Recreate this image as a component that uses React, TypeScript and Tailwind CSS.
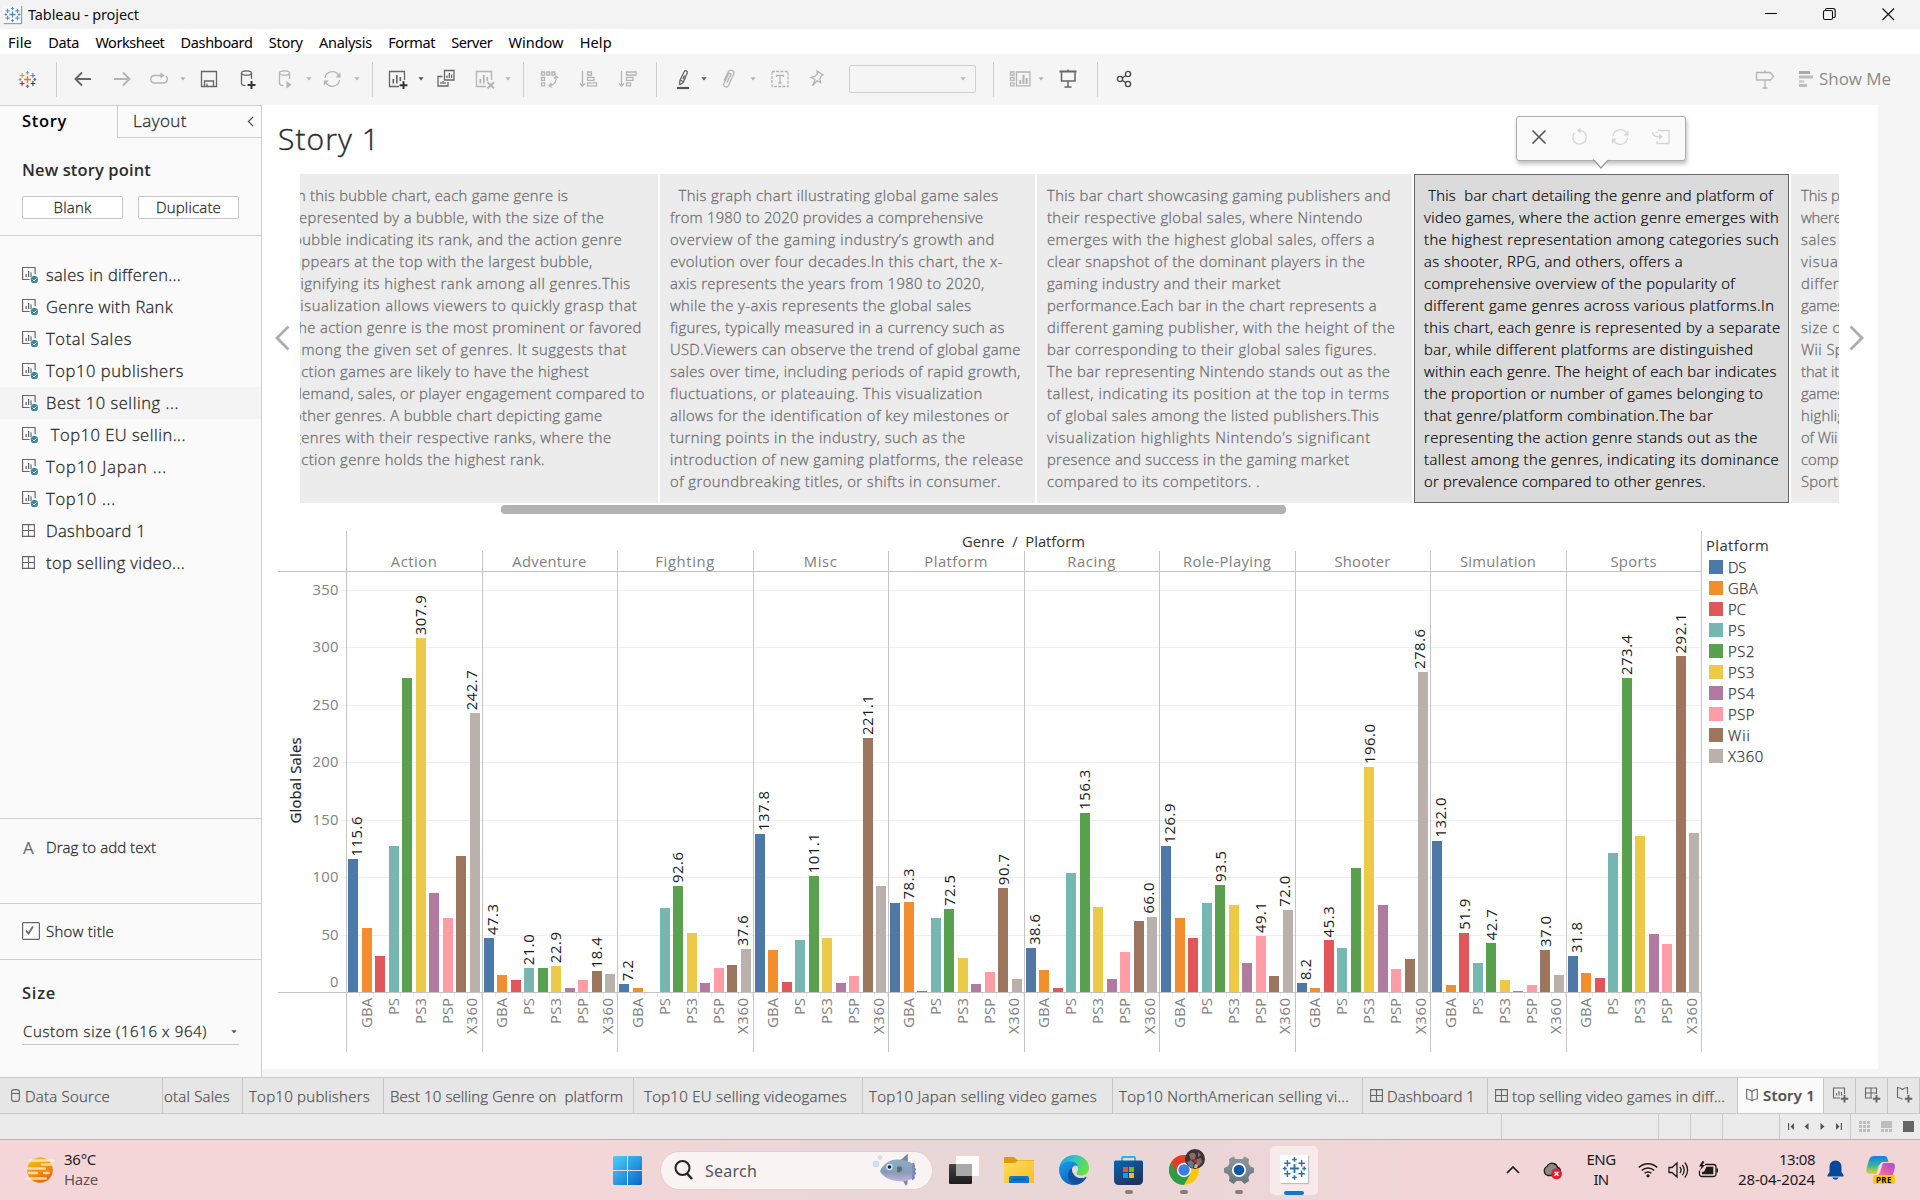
import React, { useLayoutEffect, useRef, useState } from "react";

/* Text run that spreads its letters so the line takes the given width. */
function Fit({ t, w, c = "" }: { t: string; w: number; c?: string }) {
  const ref = useRef<HTMLSpanElement>(null);
  const [ls, setLs] = useState(0);
  useLayoutEffect(() => {
    const el = ref.current;
    if (!el) return;
    const natural = el.getBoundingClientRect().width - ls * t.length;
    setLs((w - natural) / t.length);
  }, [t, w]);
  return (
    <span ref={ref} className={"inline-block whitespace-pre " + c} style={{ letterSpacing: `${ls}px` }}>
      {t}
    </span>
  );
}

function Ico({ c = "", s = "#666", children }: { c?: string; s?: string; children: React.ReactNode }) {
  return (
    <svg className={"shrink-0 " + c} width="22" height="22" viewBox="0 0 22 22" fill="none" stroke={s} strokeWidth="1.3">
      {children}
    </svg>
  );
}

const Caret = ({ c = "", dark = false }: { c?: string; dark?: boolean }) => (
  <svg className={"shrink-0 " + c} width="6" height="4" viewBox="0 0 6 4">
    <path d="M0.4 0.3h5.2L3 3.6z" fill={dark ? "#555" : "#b4b4b4"} />
  </svg>
);

const Sep = ({ c = "" }: { c?: string }) => <div className={"h-[35px] w-px shrink-0 bg-[#cfcfcf] " + c} />;

const PLUS: [number, number, number, string][] = [
  [11, 11, 3.4, "#e8762d"],
  [5.6, 7, 2.4, "#eb9129"],
  [16.4, 7, 2.4, "#5b879b"],
  [5.6, 15, 2.4, "#c72035"],
  [16.4, 15, 2.4, "#1f457e"],
  [11, 4.2, 1.7, "#7199a6"],
  [11, 17.8, 1.7, "#5b6591"],
  [3.6, 11, 1.5, "#7199a6"],
  [18.4, 11, 1.5, "#5b6591"],
];

function TableauMark({ size, color, c = "" }: { size: number; color?: string; c?: string }) {
  return (
    <svg className={"shrink-0 " + c} width={size} height={size} viewBox="1.5 1.5 19 19" fill="none">
      {PLUS.map(([x, y, r, k], i) => (
        <path key={i} d={`M${x - r} ${y}h${2 * r}M${x} ${y - r}v${2 * r}`} stroke={color || k} strokeWidth={i === 0 ? 1.4 : 1.1} />
      ))}
    </svg>
  );
}

const G = "#b4b4b4";

function Toolbar() {
  return (
    <div className="flex h-[51px] items-center bg-[#f5f5f5]">
      <TableauMark size={19} c="ml-[18px]" />
      <Sep c="ml-[19px]" />
      <Ico c="ml-[15px]"><path d="M19 11H4M10 4.5L3.5 11l6.500 6.500" strokeWidth="1.900" /></Ico>
      <Ico c="ml-[17px]" s={G}><path d="M3 11h15M12 4.500l6.500 6.500-6.500 6.500" strokeWidth="1.900" /></Ico>
      <Ico c="ml-[15px]" s={G}><path d="M13 7.500H6a3.800 3.800 0 0 0 0 7.500h9.500a3.800 3.800 0 0 0 2.500-6.700" /><path d="M12.500 4.500v6l4-3z" fill={G} stroke="none" /></Ico>
      <Caret c="ml-[10px]" />
      <Ico c="ml-[12px]"><path d="M3.500 3.500h15v15h-15zM6.500 18.500v-5.500h9v5.500M9 18v-2.500" /></Ico>
      <Ico c="ml-[17px]"><ellipse cx="9.500" cy="5" rx="5" ry="2.200" /><path d="M4.500 5v10.500c0 1.200 2 2 4 2.200M14.500 5v6" /><path d="M14.500 13v8M10.500 17h8" stroke="#333" strokeWidth="2" /></Ico>
      <Ico c="ml-[16px]" s={G}><ellipse cx="9.500" cy="5" rx="5" ry="2.200" /><path d="M4.500 5v10.500c0 1.200 2 2 4 2.200M14.500 5v6" /><path d="M11.500 13v7.500l5-3.800z" fill={G} stroke="none" /></Ico>
      <Caret c="ml-[9px]" />
      <Ico c="ml-[9px]" s={G}><path d="M4 10a7.300 7.300 0 0 1 13.500-2.700M18.500 12A7.300 7.300 0 0 1 5 14.700" /><path d="M19.500 4.500v5h-5zM2.800 17.500v-5h5z" fill={G} stroke="none" /></Ico>
      <Caret c="ml-[11px]" />
      <Sep c="ml-[12px]" />
      <Ico c="ml-[14px]"><path d="M12 18.500H2.500v-15h15V12" /><path d="M6.300 15.500V11M9.800 15.500V7M13.300 13V9" strokeWidth="1.700" /><path d="M16.500 13.300v7.700M12.600 17.200h7.800" stroke="#333" strokeWidth="2" /></Ico>
      <Caret c="ml-[9px]" dark />
      <Ico c="ml-[11px]"><path d="M9.500 2.500h9.500v9.500H9.500zM7.500 8.500h-4.500v9.500h10v-4M12 10V7.500M14.300 10V5M16.600 10V6.500M6 16v-2M8 16v-3M10 16v-2" /></Ico>
      <Ico c="ml-[17px]" s={G}><path d="M12 18.500H2.500v-15h15V12" /><path d="M6.300 15.500V11M9.800 15.500V7M13.300 13V9" strokeWidth="1.700" /><path d="M13.500 14.300l6.500 6M20 14.300l-6.500 6" strokeWidth="2" /></Ico>
      <Caret c="ml-[9px]" />
      <Sep c="ml-[12px]" />
      <Ico c="ml-[14px]" s={G}><path d="M3.500 4h3v3h-3zM8.700 4h3v3h-3zM13.900 4h3v3h-3zM3.500 9.400h3v3h-3zM3.500 14.800h3v3h-3zM18 9.500c1 4-2 7.500-6.500 8M16 10.500l2-2.200 2.400 1.600M13.500 15l-2.300 2.400 2.300 2.100" /></Ico>
      <Ico c="ml-[18px]" s={G}><path d="M4.500 3v15M2 15.300l2.500 3 2.500-3M9.500 4h4v3h-4zM9.500 9.400h6.500v3H9.500zM9.500 14.800h9v3h-9z" /></Ico>
      <Ico c="ml-[17px]" s={G}><path d="M4.500 3v15M2 15.300l2.500 3 2.500-3M9.500 4h9.500v3H9.500zM9.500 9.400h6.500v3H9.500zM9.500 14.800h4v3h-4z" /></Ico>
      <Sep c="ml-[17px]" />
      <Ico c="ml-[15px]"><path d="M12.300 3.500c1-1.500 3.500-.5 3 1.300l-4 9.500-3 2.200-.8-.3.400-3.700zM8.200 12.200l3 1.300M12.500 7.500l-1.600 3.700" /><path d="M5 20h12" stroke="#555" strokeWidth="2.200" /></Ico>
      <Caret c="ml-[7px]" dark />
      <Ico c="ml-[11px]" s={G}><path d="M9 14.500l4-8.500M6 12.500l4.500-9c1.500-2.800 6.500-1 5.300 2.300L10.500 17.500c-1.300 2.700-5.800 1.200-4.600-1.800l4.600-9.700c.8-1.500 3-.8 2.500 1" /></Ico>
      <Caret c="ml-[10px]" />
      <Ico c="ml-[13px]" s={G}><path d="M3 3.500h16v15H3z" strokeDasharray="3 1.200" /><path d="M7.500 9V7.300h7V9M11 7.300v7.700M9.300 15h3.400" /></Ico>
      <Ico c="ml-[14px]" s={G}><path d="M12 3l6 4-1.500.8-1.700 3.200.7 3.500-3.500-1.800-4.500 5 2.500-6.200-4-2 4-1 2.500-3z" /></Ico>
      <div className="ml-[22px] flex h-[28px] w-[127px] items-center justify-end rounded-[2px] border border-[#d0d0d0] pr-[9px]"><Caret /></div>
      <Sep c="ml-[17px]" />
      <Ico c="ml-[15px]" s={G}><path d="M1.500 4h3.500v3H1.500zM1.500 9.300h3.500v3H1.500zM1.500 14.800h3.500v3H1.500zM7.500 4H21v13.800H7.500z" /><path d="M11.300 16v-4M14.500 16V7M17.700 16v-6" strokeWidth="2" /></Ico>
      <Caret c="ml-[7px]" />
      <Ico c="ml-[13px]"><path d="M2.500 3.500h17" strokeWidth="2" /><path d="M4.500 4v9h13.500V4M11 13v6M7.500 19h7M11 1.500V3" strokeWidth="1.500" /></Ico>
      <Sep c="ml-[18px]" />
      <Ico c="ml-[15px]" s="#444"><circle cx="7" cy="11" r="2.600" /><circle cx="15" cy="6" r="2.600" /><circle cx="15" cy="16" r="2.600" /><path d="M9.300 10l3.500-2.500M9.300 12.200l3.500 2.500" /></Ico>
      <div className="ml-auto flex items-center pr-[29px] text-[#8a8a8a]">
        <Ico s={G}><path d="M2.500 4.500h14l3 3.800-3 3.700h-14zM11 2v2.500M11 12v8M8.500 20h5" /></Ico>
        <svg className="ml-[23px]" width="15" height="18" viewBox="0 0 15 18"><path d="M0 1h11v3H0z" fill="#a9a9a9" /><path d="M0 5.500h14v3H0z" fill="#bcbcbc" /><path d="M0 10h5v3H0z" fill="#cfcfcf" /><path d="M0 14h8v3H0z" fill="#bcbcbc" /></svg>
        <Fit t="Show Me" w={72} c="ml-[5px] text-[17px]" />
      </div>
    </div>
  );
}

const MENU: [string, number][] = [
  ["File", 24], ["Data", 31], ["Worksheet", 69], ["Dashboard", 72], ["Story", 34],
  ["Analysis", 53], ["Format", 47], ["Server", 41], ["Window", 55], ["Help", 32],
];

function SheetIcon() {
  return (
    <svg width="18" height="18" viewBox="0 0 18 18" fill="none" stroke="#666" strokeWidth="1.200" className="shrink-0">
      <path d="M7.500 13.500H0.600v-12h12.500V8" />
      <path d="M4.200 11V8M6.600 11V5M9 11V6.500" />
      <circle cx="12.400" cy="13.700" r="3.600" fill="#3f83a3" stroke="none" />
      <path d="M10.700 13.700l1.300 1.300 2.200-2.500" stroke="#fff" strokeWidth="1" />
    </svg>
  );
}

const GridIcon = ({ c = "" }: { c?: string }) => (
  <svg width="13" height="13" viewBox="0 0 13 13" fill="none" stroke="#666" strokeWidth="1.100" className={"shrink-0 " + c}>
    <path d="M.6.6h11.800v11.800H.6zM6.500.6v11.800M.6 6.500h11.800" />
  </svg>
);

const SHEETS: [string, number, boolean][] = [
  ["sales in differen...", 135, true],
  ["Genre with Rank", 127, true],
  ["Total Sales", 86, true],
  ["Top10 publishers", 138, true],
  ["Best 10 selling ...", 133, true],
  [" Top10 EU sellin...", 140, true],
  ["Top10 Japan ...", 121, true],
  ["Top10 ...", 70, true],
  ["Dashboard 1", 100, false],
  ["top selling video...", 139, false],
];

function Sidebar() {
  return (
    <div className="flex h-[972px] w-[262px] shrink-0 flex-col border-r border-t border-[#cfcfcf] bg-[#fafafa] text-[#2c2c2c]">
      <div className="flex h-[32px]">
        <div className="flex w-[117px] items-center pb-px pl-[22px] font-semibold text-black"><Fit t="Story" w={45} c="text-[16.500px]" /></div>
        <div className="flex flex-1 items-center justify-between border-b border-l border-[#cfcfcf] pl-[15px] pr-[7px]">
          <Fit t="Layout" w={54} c="text-[17px] font-light [-webkit-text-stroke:0.3px]" />
          <svg width="7" height="11" viewBox="0 0 7 11" fill="none" stroke="#555" strokeWidth="1.300"><path d="M6 1L1.500 5.500 6 10" /></svg>
        </div>
      </div>
      <div className="flex h-[98px] flex-col border-b border-[#cfcfcf] px-[22px] pt-[20px]">
        <Fit t="New story point" w={129} c="text-[16.500px] font-semibold leading-[24px] self-start" />
        <div className="mt-[14px] flex gap-[15px] text-[15px] font-light [-webkit-text-stroke:0.3px]">
          <div className="flex h-[23px] w-[101px] items-center justify-center rounded-[2px] border border-[#c6c6c6] bg-white"><Fit t="Blank" w={38} /></div>
          <div className="flex h-[23px] w-[101px] items-center justify-center rounded-[2px] border border-[#c6c6c6] bg-white"><Fit t="Duplicate" w={65} /></div>
        </div>
      </div>
      <div className="flex h-[583px] flex-col border-b border-[#cfcfcf] pt-[23px] text-[16.500px] font-light [-webkit-text-stroke:0.3px]">
        {SHEETS.map(([t, w, sheet], i) => (
          <div key={t} className={"flex h-[32px] items-center pl-[22px] " + (i === 4 ? "bg-[#f4f4f4]" : "")}>
            <div className="w-[24px]">{sheet ? <SheetIcon /> : <GridIcon />}</div>
            <Fit t={t} w={w} c="mt-px leading-[24px]" />
          </div>
        ))}
      </div>
      <div className="flex h-[85px] items-center border-b border-[#cfcfcf] pb-[26px] pl-[22px] font-light">
        <div className="w-[24px] pl-px text-[17px] font-normal leading-none text-[#666]">A</div>
        <Fit t="Drag to add text" w={110} c="text-[15px] [-webkit-text-stroke:0.3px]" />
      </div>
      <div className="flex h-[56px] items-center border-b border-[#cfcfcf] pl-[22px] font-light [-webkit-text-stroke:0.3px]">
        <svg width="18" height="18" viewBox="0 0 18 18" fill="none" stroke="#666" className="mr-[6px]"><rect x=".6" y=".6" width="16.800" height="16.800" rx="1" fill="#fff" strokeWidth="1.200" /><path d="M4 8.500l2.500 3L11 4.500" strokeWidth="1.700" /></svg>
        <Fit t="Show title" w={68} c="text-[15px]" />
      </div>
      <div className="flex flex-col px-[22px] pt-[21px]">
        <Fit t="Size" w={34} c="text-[16.500px] font-semibold leading-[24px] self-start" />
        <div className="mt-[15px] flex h-[25px] items-center justify-between border-b border-[#c6c6c6] pr-px font-light [-webkit-text-stroke:0.3px]">
          <Fit t="Custom size (1616 x 964)" w={184} c="ml-px text-[15px]" />
          <Caret dark c="mr-[1px]" />
        </div>
      </div>
    </div>
  );
}

type Line = [string, number];
const CARD1: Line[] = [
  ["In this bubble chart, each game genre is", 464], ["represented by a bubble, with the size of the", 493.500],
  ["bubble indicating its rank, and the action genre", 508], ["appears at the top with the largest bubble,", 484],
  ["signifying its highest rank among all genres.This", 515], ["visualization allows viewers to quickly grasp that", 520.500],
  ["the action genre is the most prominent or favored", 524], ["among the given set of genres. It suggests that", 512],
  ["action games are likely to have the highest", 481], ["demand, sales, or player engagement compared to", 526.500],
  ["other genres. A bubble chart depicting game", 492], ["genres with their respective ranks, where the", 499.500],
  ["action genre holds the highest rank.", 445],
];
const CARD2: Line[] = [
  ["  This graph chart illustrating global game sales", 815.500], ["from 1980 to 2020 provides a comprehensive", 803],
  ["overview of the gaming industry’s growth and", 812.500], ["evolution over four decades.In this chart, the x-", 819],
  ["axis represents the years from 1980 to 2020,", 804], ["while the y-axis represents the global sales", 793.500],
  ["figures, typically measured in a currency such as", 820.500], ["USD.Viewers can observe the trend of global game", 833.500],
  ["sales over time, including periods of rapid growth,", 833.500], ["fluctuations, or plateauing. This visualization", 802.500],
  ["allows for the identification of key milestones or", 824.500], ["turning points in the industry, such as the", 788.500],
  ["introduction of new gaming platforms, the release", 836], ["of groundbreaking titles, or shifts in consumer.", 817.500],
];
const CARD3: Line[] = [
  ["This bar chart showcasing gaming publishers and", 1136], ["their respective global sales, where Nintendo", 1113],
  ["emerges with the highest global sales, offers a", 1123], ["clear snapshot of the dominant players in the", 1115],
  ["gaming industry and their market", 1046], ["performance.Each bar in the chart represents a", 1124.500],
  ["different gaming publisher, with the height of the", 1139.500], ["bar corresponding to their global sales figures.", 1124.500],
  ["The bar representing Nintendo stands out as the", 1135.500], ["tallest, indicating its position at the top in terms", 1135],
  ["of global sales among the listed publishers.This", 1126.500], ["visualization highlights Nintendo’s significant", 1119.500],
  ["presence and success in the gaming market", 1102], ["compared to its competitors. .", 1029],
];
const CARD4: Line[] = [
  [" This  bar chart detailing the genre and platform of", 1448], ["video games, where the action genre emerges with", 1453],
  ["the highest representation among categories such", 1453], ["as shooter, RPG, and others, offers a", 1374.500],
  ["comprehensive overview of the popularity of", 1417], ["different game genres across various platforms.In", 1449],
  ["this chart, each genre is represented by a separate", 1454], ["bar, while different platforms are distinguished", 1432],
  ["within each genre. The height of each bar indicates", 1451], ["the proportion or number of games belonging to", 1440],
  ["that genre/platform combination.The bar", 1399], ["representing the action genre stands out as the", 1435.500],
  ["tallest among the genres, indicating its dominance", 1453], ["or prevalence compared to other genres.", 1393],
];
const CARD5: Line[] = [
  ["This p", 1502.500], ["where", 1504], ["sales", 1500], ["visual", 1505], ["differe", 1509], ["games", 1506], ["size of", 1508],
  ["Wii Sp", 1506], ["that it", 1502], ["games", 1506], ["highlig", 1507], ["of Wii", 1500.500], ["compa", 1508], ["Sports", 1507],
];

function Card({ lines, x, active = false }: { lines: Line[]; x: number; active?: boolean }) {
  return (
    <div className={"flex h-[329px] w-[375px] shrink-0 flex-col items-start text-[14.800px] font-light " + (active ? "border border-[#666] bg-[#dbdbdb] pl-[9px] pt-[9px] text-black [-webkit-text-stroke:0.2px]" : "bg-[#ececec] pl-[10px] pt-[10px] text-[#707070] [-webkit-text-stroke:0.3px]")}>
      {lines.map(([t, r], i) => (
        <Fit key={i} t={t} w={r * 1.2245 - x} c="h-[22px] leading-[22px]" />
      ))}
    </div>
  );
}

const COLORS = ["#4e79a7", "#f28e2b", "#e15759", "#76b7b2", "#59a14f", "#edc948", "#b07aa1", "#ff9da7", "#9c755f", "#bab0ac"];
const PLATFORMS = ["DS", "GBA", "PC", "PS", "PS2", "PS3", "PS4", "PSP", "Wii", "X360"];
const DATA: { g: string; v: number[]; l: number[]; w: number }[] = [
  { g: "Action", w: 46, l: [0, 5, 9], v: [115.6, 55.9, 31.3, 127, 273.1, 307.9, 86.9, 64.6, 118.3, 242.7] },
  { g: "Adventure", w: 74, l: [0, 3, 5, 8], v: [47.3, 14.9, 10.6, 21.0, 21, 22.9, 4.3, 10.6, 18.4, 15.8] },
  { g: "Fighting", w: 59, l: [0, 4, 9], v: [7.2, 4.3, 0, 73.3, 92.6, 51.5, 8.1, 21.7, 23.6, 37.6] },
  { g: "Misc", w: 33, l: [0, 4, 8], v: [137.8, 36.6, 8.7, 45.3, 101.1, 47.8, 8.1, 14, 221.1, 92.2] },
  { g: "Platform", w: 63, l: [1, 4, 8], v: [77.6, 78.3, 0.9, 64.6, 72.5, 30.4, 7.1, 17.4, 90.7, 11.5] },
  { g: "Racing", w: 48, l: [0, 4, 9], v: [38.6, 19.2, 4.3, 103.7, 156.3, 73.9, 11.5, 34.8, 61.8, 66.0] },
  { g: "Role-Playing", w: 88, l: [0, 4, 7, 9], v: [126.9, 64.6, 47.8, 78.2, 93.5, 75.7, 26, 49.1, 14, 72.0] },
  { g: "Shooter", w: 56, l: [0, 2, 5, 9], v: [8.2, 3.7, 45.3, 39.1, 108.6, 196.0, 75.7, 20.2, 28.9, 278.6] },
  { g: "Simulation", w: 76, l: [0, 2, 4, 8], v: [132.0, 6.2, 51.9, 25.5, 42.7, 10.6, 0.9, 6.2, 37.0, 14.9] },
  { g: "Sports", w: 46, l: [0, 4, 8], v: [31.8, 16.8, 12.4, 121, 273.4, 135.6, 50.6, 41.9, 292.1, 139] },
];
const X0 = 68;
const PITCH = 135.52;
const BASE = 461.5;
const UNIT = 1.1506;

function Chart() {
  const lens = [0, 30, 0, 17, 0, 26, 0, 26, 0, 36];
  return (
    <svg width="1425" height="521" viewBox="0 0 1425 521" className="shrink-0" fontSize="14.800">
      {[50, 100, 150, 200, 250, 300, 350].map((v) => (
        <g key={v}>
          <rect x="63" y={Math.round(BASE - v * UNIT)} width="1360" height="1" fill="#efefef" />
          <text x="60.500" y={BASE - v * UNIT + 5} textAnchor="end" fill="#808080" textLength={v < 100 ? 17 : 26}>{v}</text>
        </g>
      ))}
      <text x="60.500" y={455.5} textAnchor="end" fill="#808080">0</text>
      <text x="745.500" y="15.500" textAnchor="middle" fill="#333" textLength="123" className="whitespace-pre">Genre  /  Platform</text>
      <text transform="translate(23 249.500) rotate(-90)" textAnchor="middle" fill="#222" textLength="86" stroke="#222" strokeWidth=".2">Global Sales</text>
      {DATA.map((d, gi) => {
        const gx = X0 + gi * PITCH;
        return (
          <g key={d.g}>
            <text x={gx + PITCH / 2} y="36" textAnchor="middle" fill="#808080" textLength={d.w}>{d.g}</text>
            {d.v.map((v, i) => {
              const cx = gx + 7 + i * 13.53;
              const top = BASE - v * UNIT;
              const lx = cx + (i === 0 ? 4 : i === 9 ? -3.5 : 0);
              return (
                <g key={i}>
                  {v > 0 && <rect x={Math.round(cx - 5)} y={Math.round(top)} width="10" height={Math.round(BASE) - Math.round(top)} fill={COLORS[i]} />}
                  {d.l.includes(i) && (
                    <text transform={`translate(${lx + 5.3} ${top - 3}) rotate(-90)`} fill="#1a1a1a" textLength={v >= 100 ? 40 : v < 10 ? 21 : 31}>{v.toFixed(1)}</text>
                  )}
                  {i % 2 === 1 && (
                    <text transform={`translate(${cx + 5 - (i === 9 ? 2.5 : 0)} ${BASE + 5.5}) rotate(-90)`} textAnchor="end" fill="#808080" textLength={lens[i]}>{PLATFORMS[i]}</text>
                  )}
                  <rect x={Math.round(cx + 6)} y="462" width="1" height="4" fill="#ececec" />
                </g>
              );
            })}
          </g>
        );
      })}
      {Array.from({ length: 11 }, (_, i) => (
        <rect key={i} x={Math.round(X0 + i * PITCH)} y={i === 0 || i === 10 ? 0 : 20} width="1" height="521" fill="#c4c4c4" />
      ))}
      <rect x="0" y="40" width="1424" height="1" fill="#c4c4c4" />
      <rect x="0" y="461" width="1424" height="1" fill="#c4c4c4" />
    </svg>
  );
}

function Arrow({ flip = false, c = "" }: { flip?: boolean; c?: string }) {
  return (
    <svg className={"shrink-0 " + c} width="16" height="30" viewBox="0 0 16 30" fill="none" stroke="#adadad" strokeWidth="2.800">
      <path d={flip ? "M1.500 3.500L13 15 1.500 26.500" : "M14.500 3.500L3 15l11.500 11.500"} />
    </svg>
  );
}

function StoryView() {
  return (
    <div className="flex h-[972px] flex-1 items-start bg-[#f5f5f5]">
      <div className="flex h-[964px] w-[1616px] flex-col bg-white">
        <div className="relative flex h-[69px] items-center pb-[2px] pl-[16px] text-[#2c2c2c]">
          <Fit t="Story 1" w={102} c="text-[30px] font-light [-webkit-text-stroke:0.4px]" />
          <div className="absolute left-[1254px] top-[11px] flex h-[45px] w-[170px] items-center gap-[18.500px] rounded-[3px] border-[1.500px] border-[#adadad] bg-[#fafafa] pl-[11px] pb-[2px] shadow-[1px_3px_4px_rgba(0,0,0,0.25)]">
            <Ico s="#555"><path d="M4.500 4.500l13 13M17.500 4.500l-13 13" strokeWidth="1.600" /></Ico>
            <Ico s="#d6d6d6"><path d="M5.300 7a6.800 6.800 0 1 0 5.200-2.500" /><path d="M11.500 1.500v6L8 4.500z" fill="#d6d6d6" stroke="none" /></Ico>
            <Ico s="#d6d6d6"><path d="M4 10a7.300 7.300 0 0 1 13.500-2.700M18.500 12A7.300 7.300 0 0 1 5 14.700" /><path d="M19.500 4.500v5h-5zM2.800 17.500v-5h5z" fill="#d6d6d6" stroke="none" /></Ico>
            <Ico s="#d6d6d6"><path d="M8 4.500h11v13H7v-2.500M7 7V5.500M2.500 6c0 3.500 2 4.800 7 4.800" /><path d="M9 7.800v6l4-3z" fill="#d6d6d6" stroke="none" /></Ico>
            <svg className="absolute left-[75px] top-[42px]" width="18" height="11" viewBox="0 0 18 11"><path d="M1 0l8 9 8-9" fill="#fafafa" stroke="#999" strokeWidth="1.200" /><path d="M1 -.5h16v1.500H2z" fill="#fafafa" /></svg>
          </div>
        </div>
        <div className="flex h-[329px] items-center">
          <Arrow c="ml-[12px]" />
          <div className="ml-[10px] flex w-[1539px] overflow-hidden">
            <div className="-ml-[17px] flex shrink-0 gap-[2px]">
              <Card lines={CARD1} x={293} />
              <Card lines={CARD2} x={670} />
              <Card lines={CARD3} x={1047} />
              <Card lines={CARD4} x={1424} active />
              <Card lines={CARD5} x={1801} />
            </div>
          </div>
          <Arrow flip c="ml-[10px]" />
        </div>
        <div className="ml-[239px] mt-[2px] h-[9px] w-[785px] rounded-[4px] bg-[#b2b2b2]" />
        <div className="ml-[16px] mt-[17px] flex items-start">
          <Chart />
          <div className="ml-[3px] flex flex-col pt-[3px] text-[14.800px] text-[#333]">
            <Fit t="Platform" w={63} c="h-[23px] leading-[22px]" />
            {PLATFORMS.map((p, i) => (
              <div key={p} className="flex h-[21px] items-center font-light [-webkit-text-stroke:0.25px]">
                <svg width="15" height="15" className="ml-[2px]"><rect x="1" y="0" width="14" height="14" fill={COLORS[i]} /></svg>
                <Fit t={p} w={[18, 30, 18, 18, 27, 27, 27, 27, 23, 36][i]} c="ml-[5px]" />
              </div>
            ))}
          </div>
        </div>
      </div>
    </div>
  );
}

const BookIcon = ({ c = "" }: { c?: string }) => (
  <svg width="12" height="14" viewBox="0 0 12 14" fill="none" stroke="#666" strokeWidth="1.100" className={"shrink-0 " + c}>
    <path d="M6 3.500C4.500 2 3 1.500.7 1.300v9.500C3 11 4.500 11.500 6 12.800c1.500-1.300 3-1.800 5.300-2V1.300C9 1.500 7.500 2 6 3.500zM6 3.500v9" />
  </svg>
);

function Tab({ c, children }: { c: string; children: React.ReactNode }) {
  return <div className={"flex h-full shrink-0 items-center overflow-hidden border-r border-[#c6c6c6] " + c}>{children}</div>;
}

function SheetTabs() {
  return (
    <div className="flex h-[38px] border-b border-t border-[#c9c9c9] bg-[#e6e6e6] text-[15px] font-light text-[#505050] [-webkit-text-stroke:0.25px]">
      <Tab c="w-[163px] pl-[11px]">
        <svg width="9" height="13" viewBox="0 0 9 13" fill="none" stroke="#666" strokeWidth="1.100"><rect x=".6" y=".6" width="7.800" height="11.800" rx="2.500" /><path d="M.6 4.500h7.800" /></svg>
        <Fit t="Data Source" w={85} c="ml-[5px] mt-[2px]" />
      </Tab>
      <Tab c="w-[80px]"><Fit t="otal Sales" w={66} c="mt-[2px] ml-px" /></Tab>
      <Tab c="w-[141px] pl-[6px]"><Fit t="Top10 publishers" w={121} c="mt-[2px]" /></Tab>
      <Tab c="w-[250px] pl-[6px]"><Fit t="Best 10 selling Genre on  platform" w={233} c="mt-[2px]" /></Tab>
      <Tab c="w-[229px] pl-[10px]"><Fit t="Top10 EU selling videogames" w={203} c="mt-[2px]" /></Tab>
      <Tab c="w-[250px] pl-[6px]"><Fit t="Top10 Japan selling video games" w={228} c="mt-[2px]" /></Tab>
      <Tab c="w-[250px] pl-[6px]"><Fit t="Top10 NorthAmerican selling vi..." w={230} c="mt-[2px]" /></Tab>
      <Tab c="w-[125px] pl-[7px]"><GridIcon /><Fit t="Dashboard 1" w={88} c="ml-[4px] mt-[2px]" /></Tab>
      <Tab c="w-[250px] pl-[7px]"><GridIcon /><Fit t="top selling video games in diff..." w={213} c="ml-[4px] mt-[2px]" /></Tab>
      <Tab c="w-[86px] pl-[8px] bg-[#fafafa] font-semibold"><BookIcon /><Fit t="Story 1" w={52} c="ml-[5px]" /></Tab>
      <Tab c="w-[32px] justify-center">
        <svg width="18" height="18" viewBox="0 0 18 18" fill="none" stroke="#666" strokeWidth="1.100"><path d="M9 12H2.500V2h11v6M5.500 9.500V7M8 9.500V5M10.500 9.500V6" /><path d="M13.500 9v7.500M9.800 12.800h7.500" strokeWidth="2" /></svg>
      </Tab>
      <Tab c="w-[32px] justify-center">
        <svg width="18" height="18" viewBox="0 0 18 18" fill="none" stroke="#666" strokeWidth="1.100"><path d="M9 12H2.500V2h11v6M8 2v10M2.500 7h11" /><path d="M13.500 9v7.500M9.800 12.800h7.500" strokeWidth="2" /></svg>
      </Tab>
      <Tab c="w-[32px] justify-center">
        <svg width="18" height="18" viewBox="0 0 18 18" fill="none" stroke="#666" strokeWidth="1.100"><path d="M7.500 3.500C6 2 4.500 1.700 2.500 1.500v10c2 0 3.500.5 5 1.800M7.500 3.500C9 2 10.500 1.700 12.500 1.500V8" /><path d="M13.500 9v7.500M9.800 12.800h7.500" strokeWidth="2" /></svg>
      </Tab>
    </div>
  );
}

function StatusStrip() {
  return (
    <div className="flex h-[26px] justify-end border-b border-[#bfb0b0] bg-[#ebebeb]">
      <div className="h-full w-[157px] border-l border-[#c9c9c9]" />
      <div className="h-full w-[32px] border-l border-[#c9c9c9]" />
      <div className="h-full w-[32px] border-l border-[#c9c9c9]" />
      <div className="h-full w-[57px] border-l border-[#c9c9c9]" />
      <div className="flex h-full w-[71px] items-center border-l border-[#c9c9c9] pl-[8px]">
        <svg width="56" height="9" viewBox="0 0 56 9" fill="#555"><path d="M0 1h1.200v7H0zM6 1v7L2.500 4.500zM20.500 1v7l-4-3.500zM32.500 1v7l4-3.500zM48 1v7l3.500-3.500zM52.800 1H54v7h-1.200z" /></svg>
      </div>
      <div className="flex h-full w-[70px] items-center gap-[11px] border-l border-[#c9c9c9] pl-[8px]">
        <svg width="11" height="11" viewBox="0 0 11 11" fill="#bdbdbd"><path d="M0 0h3v3H0zM4 0h3v3H4zM8 0h3v3H8zM0 4h3v3H0zM4 4h3v3H4zM8 4h3v3H8zM0 8h3v3H0zM4 8h3v3H4zM8 8h3v3H8z" /></svg>
        <svg width="11" height="11" viewBox="0 0 11 11" fill="#bdbdbd"><path d="M0 0h11v7H0zM0 8h3v3H0zM4 8h3v3H4zM8 8h3v3H8z" /></svg>
        <div className="h-[11px] w-[11px] bg-[#666]" />
      </div>
    </div>
  );
}

function AppSlot({ c = "", dot = false, children }: { c?: string; dot?: boolean; children: React.ReactNode }) {
  return (
    <div className={"flex h-[48px] w-[30px] shrink-0 flex-col items-center " + c}>
      <div className="mt-[9px] h-[30px] w-[30px]">{children}</div>
      {dot && <div className="mt-[5px] h-[4px] w-[8px] rounded-full bg-[#8a7c7d]" />}
    </div>
  );
}

function Taskbar() {
  return (
    <div className="flex h-[60px] items-center bg-[linear-gradient(90deg,#f5d6d8_0%,#f4d6d8_30%,#e9d6d7_45%,#ead6d7_62%,#f2d5d7_75%,#f2d5d7_100%)] font-['Noto_Sans'] text-[15px] text-[#1c1c1c]">
      <svg className="ml-[25px] shrink-0" width="30" height="28" viewBox="0 0 30 28">
        <defs><linearGradient id="sun" x1="0" y1="0" x2=".5" y2="1"><stop offset="0" stopColor="#ffc91a" /><stop offset="1" stopColor="#e86c0a" /></linearGradient></defs>
        <circle cx="15" cy="14" r="12.800" fill="url(#sun)" />
        <path d="M5 4.500h24M17 8.500h9M3 12.500h17M4 17h8M19 17h5M1 22.500h20" stroke="#fff0cf" strokeWidth="2.300" strokeLinecap="round" opacity=".75" />
      </svg>
      <div className="-mt-[2px] ml-[9px] flex w-[120px] flex-col">
        <Fit t="36°C" w={32} c="h-[20px] leading-[20px] self-start" />
        <Fit t="Haze" w={34} c="h-[20px] leading-[20px] self-start text-[#5c5254]" />
      </div>
      <svg className="ml-[429px] shrink-0" width="29" height="29" viewBox="0 0 29 29">
        <defs><linearGradient id="win" x1="0" y1="0" x2="1" y2="1"><stop offset="0" stopColor="#4fd0fb" /><stop offset="1" stopColor="#0567c7" /></linearGradient></defs>
        <path d="M1 0h13v14H0V1zM15 0h13l1 1v13H15zM0 15h14v14H1l-1-1zM15 15h14v13l-1 1H15z" fill="url(#win)" />
      </svg>
      <div className="ml-[18px] flex h-[39px] w-[273px] shrink-0 items-center rounded-full border border-[#e3cfd0] bg-[#faf3f3] pl-[13px] pr-[14px]">
        <svg width="20" height="20" viewBox="0 0 20 20" fill="none" stroke="#222" strokeWidth="2"><circle cx="8.500" cy="8" r="7" /><path d="M13 13.500l5 5.500" strokeWidth="2.500" /></svg>
        <Fit t="Search" w={52} c="ml-[11px] mt-[2px] text-[16px] text-[#555]" />
        <svg className="ml-auto" width="46" height="32" viewBox="0 0 46 32">
          <defs><linearGradient id="fish" x1="0" y1="0" x2="0" y2="1"><stop offset="0" stopColor="#8eaec0" /><stop offset=".6" stopColor="#8a9bb8" /><stop offset="1" stopColor="#c3b2dc" /></linearGradient></defs>
          <path d="M28 6c3-1 4-4 8-6-.5 4 .5 6-1 9zM30 25l4 7c2-2 2-5 1-8z" fill="#75889c" />
          <path d="M8 17c3-7 10-12 18-11.500 8 .5 14 3 16 5.500 1 5 1 9-1 13-4 3-10 4-16 3-7-.5-13-4-16-8z" fill="url(#fish)" />
          <path d="M41 9l1 3-1 1.500 2 2-2 2 2 2-2 2 1 2-2 2" fill="none" stroke="#7c7fb3" strokeWidth="2" />
          <circle cx="17.500" cy="13" r="3.200" fill="#c6e4f4" /><circle cx="17.500" cy="13" r="1.800" fill="#14263c" />
          <path d="M25 13c4-2 6 1 5 3s-3 3-5 2z" fill="#55707f" />
          <circle cx="4" cy="10" r="2.800" fill="#cfe6ef" stroke="#b4cfe0" strokeWidth=".7" /><circle cx="8" cy="3.500" r="1.800" fill="#dfe6ef" stroke="#b9cfe0" strokeWidth=".7" />
        </svg>
      </div>
      <AppSlot c="ml-[16px]">
        <svg width="30" height="30" viewBox="0 0 30 30"><defs><linearGradient id="tv" x1="0" y1="0" x2="0" y2="1"><stop offset="0" stopColor="#444" /><stop offset="1" stopColor="#1c1c1c" /></linearGradient></defs><rect x="0" y="9" width="23" height="20" rx="1" fill="url(#tv)" /><rect x="7" y="1" width="23" height="20" rx="1" fill="#fff" opacity=".9" /><rect x="7" y="9" width="16" height="12" fill="#a9a9a9" /></svg>
      </AppSlot>
      <AppSlot c="ml-[25px]">
        <svg width="30" height="30" viewBox="0 0 30 30"><defs><linearGradient id="fo" x1="0" y1="0" x2="1" y2="1"><stop offset="0" stopColor="#ffdb62" /><stop offset="1" stopColor="#fbbd22" /></linearGradient></defs><path d="M0 3q0-1 1-1h9l3 3h17v6H0z" fill="#dc9b07" /><path d="M0 8h11l3-2.500h16V28H0z" fill="url(#fo)" /><path d="M5 28v-5q0-2 2-2h16q2 0 2 2v5z" fill="#0f76cf" /><path d="M9 24.500h12" stroke="#084f9c" strokeWidth="1.300" /></svg>
      </AppSlot>
      <AppSlot c="ml-[25px]">
        <svg width="30" height="30" viewBox="0 0 30 30">
          <defs>
            <linearGradient id="e1" x1="0" y1="0" x2="1" y2=".3"><stop offset="0" stopColor="#1da1e6" /><stop offset=".5" stopColor="#2fc3c8" /><stop offset="1" stopColor="#64e345" /></linearGradient>
            <linearGradient id="e2" x1="0" y1="0" x2=".6" y2="1"><stop offset="0" stopColor="#1b9be8" /><stop offset="1" stopColor="#0b63c0" /></linearGradient>
          </defs>
          <path d="M0 14C1 5 8 0 15 0c9 0 15 6 15 13 0 5-4 7.500-8 7.500-3 0-4.500-1-4.500-2.300 0-1 1.500-1.700 1.500-4.200 0-3-3-5.500-7-5.500C6 8.500 1 11 0 14z" fill="url(#e1)" />
          <path d="M0 14c1-5 6-7.500 11-7.500 4 0 7 2 7.800 4.500-2-1.200-6-.5-6 5 0 6 5 11 12 10C21 29 18 30 15 30 6 30 0 23 0 14z" fill="url(#e2)" />
          <path d="M12.800 13C10 15 8.500 18 9 21.500c.7 4.500 4.500 8 9 8 4-1 7.500-3.500 9.500-7 .2-.6-.3-.9-.8-.6-7 3.500-14-1-13.900-8.900z" fill="#12529c" />
        </svg>
      </AppSlot>
      <AppSlot c="ml-[25px]" dot>
        <svg width="30" height="30" viewBox="0 0 30 30"><defs><linearGradient id="st" x1="0" y1="0" x2=".6" y2="1"><stop offset="0" stopColor="#0866b4" /><stop offset="1" stopColor="#1d3461" /></linearGradient></defs><path d="M8 8V3q0-1 1-1h11q1 0 1 1v5" fill="none" stroke="#25b5ee" strokeWidth="1.800" /><path d="M0 7q0-1.500 1.500-1.500h26Q29 5.500 29 7v18q0 5-5 5H5q-5 0-5-5z" fill="url(#st)" /><path d="M9 12h5v5H9z" fill="#f25022" /><path d="M15 12h5v5h-5z" fill="#7fba00" /><path d="M9 18h5v5H9z" fill="#00a4ef" /><path d="M15 18h5v5h-5z" fill="#ffb900" /></svg>
      </AppSlot>
      <AppSlot c="ml-[25px]" dot>
        <svg width="38" height="36" viewBox="0 -6 38 36" className="-mt-[6px]">
          <circle cx="15" cy="15" r="15" fill="#fdc714" />
          <path d="M15 15L2 7.500A15 15 0 0 0 15 30l6.500-11.250z" fill="#2c9d47" />
          <path d="M15 15V7.500h13A15 15 0 0 0 2 7.500l6.500 11.250z" fill="#e33b2e" />
          <circle cx="15" cy="15" r="7.200" fill="#fff" /><circle cx="15" cy="15" r="5.700" fill="#3c7dea" />
          <circle cx="26" cy="4" r="10" fill="#3f3334" />
          <path d="M20 0c2-3 5-3 7 0l-1 4-4 1zM28 4l4-1 1 4-3 4-3-2z" fill="#8d6a61" />
          <path d="M18 7l4-2 3 3-1 5-4-1zM29-3l3 3-3 2z" fill="#64778d" />
          <path d="M24 5l3-1 1 3-2 1z" fill="#b5342c" /><path d="M26 9l3 1-1 3h-3z" fill="#c9b8b5" />
        </svg>
      </AppSlot>
      <AppSlot c="ml-[25px]" dot>
        <svg width="30" height="30" viewBox="0 0 30 30"><defs><linearGradient id="ge" x1="0" y1="0" x2="0" y2="1"><stop offset="0" stopColor="#8e979d" /><stop offset="1" stopColor="#6a747b" /></linearGradient></defs><path d="M11.500 4L9.500 1.500 5 4l.5 4.500-2 3L0 13v4.500l3.500 1.500 2 3L5 26l4.500 3 3-3h5l3 3L25 26l-.5-4 2-3 3.500-1.500V13l-3.500-1.500-2-3L25 4l-4.500-2.500-2 2.500z" fill="url(#ge)" /><circle cx="15" cy="15" r="7" fill="#fff" /><circle cx="15" cy="15" r="5.300" fill="#0b57a8" /></svg>
      </AppSlot>
      <div className="ml-[16px] flex h-[49px] w-[48px] shrink-0 flex-col items-center rounded-[5px] bg-[#f6eaeb]">
        <div className="mt-[9px] flex h-[28px] w-[28px] items-center justify-center bg-white shadow-[1px_1px_1px_rgba(0,0,0,0.2)]"><TableauMark size={25} color="#2e6f9c" /></div>
        <div className="mt-[8px] h-[4px] w-[20px] shrink-0 rounded-full bg-[#0a78d4]" />
      </div>
      <svg className="ml-[188px] shrink-0" width="14" height="8" viewBox="0 0 14 8" fill="none" stroke="#1c1c1c" strokeWidth="1.700"><path d="M1 7l6-6 6 6" /></svg>
      <svg className="ml-[22px] mt-[2px] shrink-0" width="21" height="18" viewBox="0 0 21 18"><path d="M6 13.500a4.800 4.800 0 0 1-1-9C6 2 9 .7 11.500 1.500c2 .5 3.500 2 4 4 2 .5 3 2 3 4l-5 4z" fill="#8e8687" stroke="#222" strokeWidth="1.300" /><circle cx="14.500" cy="11.800" r="5.500" fill="#dc2231" /><path d="M12.500 9.800l4 4M16.500 9.800l-4 4" stroke="#fff" strokeWidth="1.400" /></svg>
      <div className="-mt-[2px] ml-[23px] flex w-[30px] shrink-0 flex-col items-center">
        <Fit t="ENG" w={29} c="h-[20px] leading-[20px]" />
        <Fit t="IN" w={15} c="h-[20px] leading-[20px]" />
      </div>
      <svg className="ml-[22px] shrink-0" width="20" height="16" viewBox="0 0 20 16" fill="none" stroke="#1c1c1c" strokeWidth="1.500"><path d="M.8 5.500a13 13 0 0 1 18.400 0M3.800 8.500a8.800 8.800 0 0 1 12.400 0M6.600 11.300a4.800 4.800 0 0 1 6.800 0" /><circle cx="10" cy="13.800" r="1.600" fill="#1c1c1c" stroke="none" /></svg>
      <svg className="ml-[10px] shrink-0" width="21" height="18" viewBox="0 0 21 18" fill="none" stroke="#1c1c1c" strokeWidth="1.300"><path d="M1 6.500h3L9 2v14l-5-4.500H1zM11.800 6a4.500 4.500 0 0 1 0 6M14.300 3.800a8 8 0 0 1 0 10.400M16.800 1.500a11.500 11.500 0 0 1 0 15" /></svg>
      <svg className="ml-[9px] shrink-0" width="21" height="18" viewBox="0 0 21 18"><path d="M7 3.500h8.500a2.500 2.500 0 0 1 2.500 2.500v7a2.500 2.500 0 0 1-2.500 2.500H4A2.500 2.500 0 0 1 1.500 13V9.500" fill="none" stroke="#1c1c1c" strokeWidth="1.300" /><path d="M8.500 5.800h6.800v7.400H4V10.800h2zM18.500 7.500H20v4h-1.500z" fill="#1c1c1c" /><path d="M4.500 0L1 5.500h2.500L2 9.500 7 4H4.500L6.500.5z" fill="#1c1c1c" /></svg>
      <div className="-mt-[2px] ml-[19px] flex w-[77px] shrink-0 flex-col items-end">
        <Fit t="13:08" w={36} c="h-[20px] leading-[20px]" />
        <Fit t="28-04-2024" w={77} c="h-[20px] leading-[20px]" />
      </div>
      <svg className="ml-[12px] shrink-0" width="17" height="20" viewBox="0 0 17 20" fill="#04499c"><path d="M8.500.5c4 0 6 3 6 6.500v5l2 3v1.500H.5V15l2-3V7c0-3.500 2-6.500 6-6.500zM5.500 17.500h6c-.5 1.500-1.500 2-3 2s-2.500-.5-3-2z" /></svg>
      <div className="relative ml-[22px] h-[30px] w-[30px] shrink-0">
        <svg width="30" height="30" viewBox="0 0 30 30">
          <defs>
            <linearGradient id="c1" x1="0" y1="0" x2="0" y2="1"><stop offset="0" stopColor="#1a7de8" /><stop offset=".5" stopColor="#2fb39b" /><stop offset="1" stopColor="#f2cf2b" /></linearGradient>
            <linearGradient id="c2" x1="1" y1="0" x2="0" y2="1"><stop offset="0" stopColor="#a44be8" /><stop offset=".6" stopColor="#e85fa5" /><stop offset="1" stopColor="#f79a52" /></linearGradient>
          </defs>
          <path d="M8 1h10c3 0 3.500 2 4.500 6h-5c-3 0-3 2-4 5l-2 7H4c-4 0-4-3-3-7l2-7C4 2.500 5.500 1 8 1z" fill="url(#c1)" />
          <path d="M18 8h8c3 0 3.500 3 2.500 6l-2 7H9c3 0 4-2 5-6l1-3c.6-2.500 1.500-4 3-4z" fill="url(#c2)" />
          <path d="M12 12q1.500-4 5-4l-3 10-4 3z" fill="#f5e4e8" opacity=".7" />
        </svg>
        <div className="absolute left-[7px] top-[20px] flex h-[9px] w-[22px] items-center justify-center rounded-[2px] bg-[#fdc70c] text-[8px] font-bold leading-none tracking-[0.500px] text-black">PRE</div>
      </div>
    </div>
  );
}

export default function App() {
  return (
    <div className="flex h-[1200px] w-[1920px] flex-col overflow-hidden bg-[#f5f5f5] font-['Open_Sans','Noto_Sans',sans-serif]">
      <div className="flex h-[29px] items-center bg-[#f3f3f3] font-['Noto_Sans'] text-[14.500px] text-[#111]">
        <div className="ml-[3px] flex h-[18px] w-[18px] items-center justify-center bg-[#f4f8fb] shadow-[1px_1px_1px_rgba(0,0,0,0.35)]"><TableauMark size={17} color="#4a8db5" /></div>
        <Fit t="Tableau - project" w={111} c="ml-[7px]" />
        <svg className="ml-auto mr-[25px]" width="130" height="14" viewBox="0 0 130 14" fill="none" stroke="#111" strokeWidth="1.100">
          <path d="M0 6.500h12" /><rect x="58.500" y="3.500" width="9" height="9" rx="1.500" /><path d="M60.500 3.500V3q0-1.500 1.500-1.500h6q2.200 0 2.200 2.200v5.500q0 1.300-1.200 1.300h-.8" /><path d="M117.500 1.500l11.500 11.500M129 1.500l-11.500 11.500" />
        </svg>
      </div>
      <div className="flex h-[25px] items-center gap-[16.200px] bg-white pl-[8px] pt-[3px] font-['Noto_Sans'] text-[14.500px] text-black">
        {MENU.map(([t, w]) => <Fit key={t} t={t} w={w} />)}
      </div>
      <Toolbar />
      <div className="flex">
        <Sidebar />
        <StoryView />
      </div>
      <SheetTabs />
      <StatusStrip />
      <Taskbar />
    </div>
  );
}
